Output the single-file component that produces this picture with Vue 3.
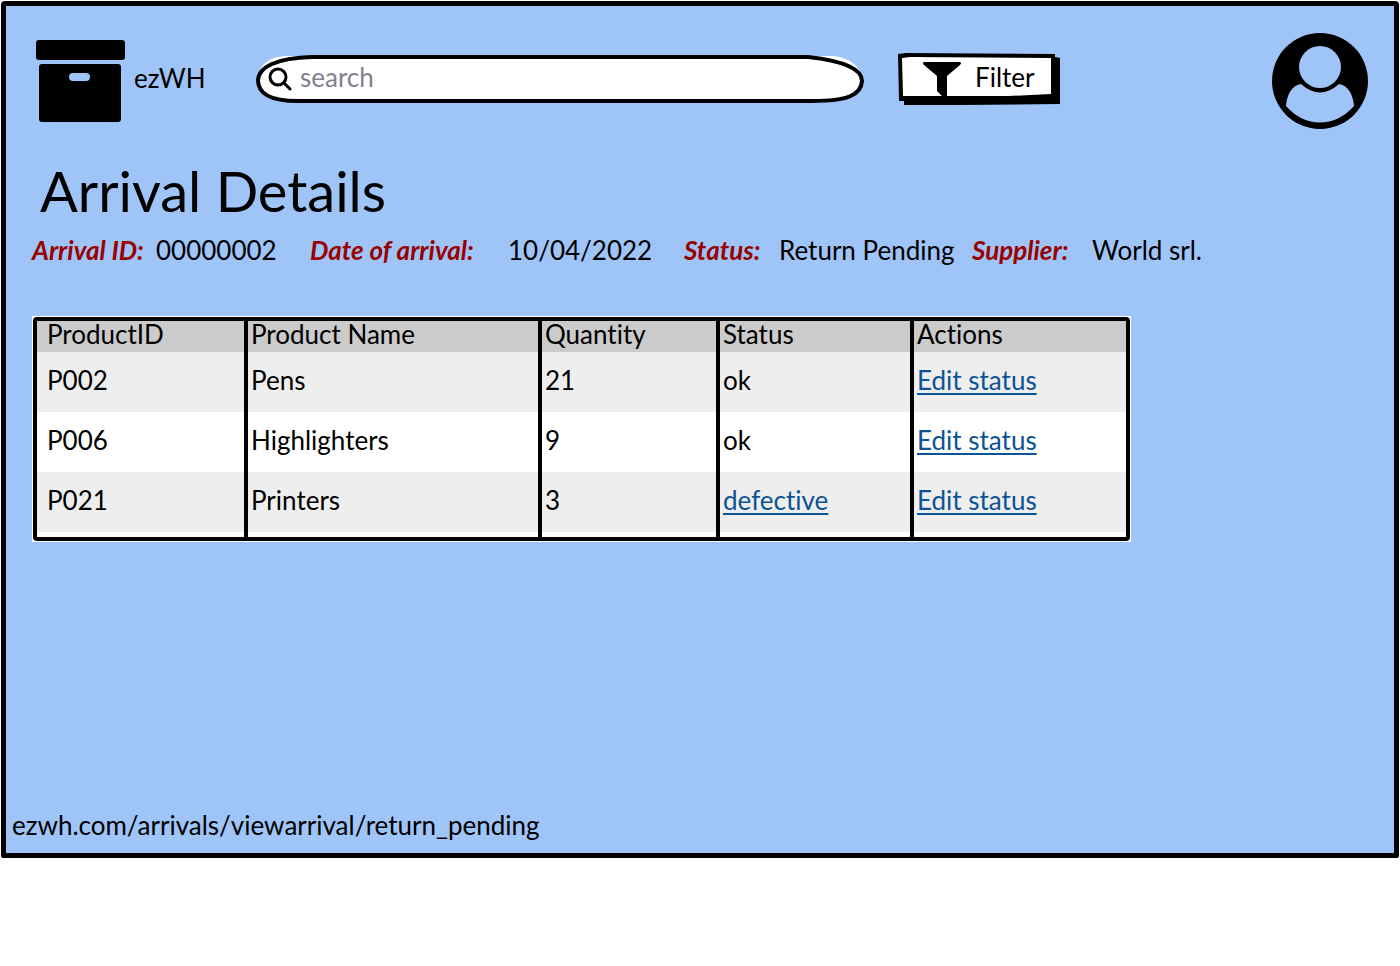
<script setup>
const details = [
  { label: 'Arrival ID:', value: '00000002' },
  { label: 'Date of arrival:', value: '10/04/2022' },
  { label: 'Status:', value: 'Return Pending' },
  { label: 'Supplier:', value: 'World srl.' },
]
const columns = ['ProductID', 'Product Name', 'Quantity', 'Status', 'Actions']
const products = [
  { id: 'P002', name: 'Pens', quantity: 21, status: 'ok' },
  { id: 'P006', name: 'Highlighters', quantity: 9, status: 'ok' },
  { id: 'P021', name: 'Printers', quantity: 3, status: 'defective' },
]
</script>

<template>
  <div class="window">
    <header class="topbar">
      <a class="brand" href="#">
        <svg class="brand-icon" viewBox="0 0 90 82" aria-hidden="true">
          <rect x="1" y="0" width="89" height="20" rx="3" />
          <path fill-rule="evenodd" d="M7 24H83Q86 24 86 27V79Q86 82 83 82H7Q4 82 4 79V27Q4 24 7 24ZM38 33A4 4 0 0 0 38 41H51A4 4 0 0 0 51 33Z" />
        </svg>
        <span>ezWH</span>
      </a>

      <div class="search">
        <svg class="sketch" viewBox="0 0 608 48" preserveAspectRatio="none" aria-hidden="true">
          <path fill="#fff" d="M30 1H576C592 2 604 10 606 24C604 40 592 46 574 46H32C12 46 2 38 2 24C3 10 12 2 30 1Z" />
          <path fill="none" stroke="#000" stroke-width="4" d="M56 2H552C588 6 606 14 606 26C605 40 592 46 556 46H42C14 46 2 39 2 25C3 12 20 3 56 2Z" />
        </svg>
        <svg class="search-icon" viewBox="0 0 24 24" aria-hidden="true">
          <circle cx="10" cy="10" r="8" fill="none" stroke="#000" stroke-width="3" />
          <path d="M16 16L22 22" stroke="#000" stroke-width="3" stroke-linecap="round" />
        </svg>
        <input type="search" placeholder="search" aria-label="Search" />
      </div>

      <button class="filter" type="button">
        <svg class="sketch" viewBox="0 0 162 52" preserveAspectRatio="none" aria-hidden="true">
          <path d="M0 1L8 0L157 1V4L162 5V51L60 52H6V48H1Z" />
          <path fill="#fff" d="M4 5L12 4L153 5V41L110 43H5Z" />
        </svg>
        <svg class="funnel" viewBox="0 0 38 34" aria-hidden="true">
          <path d="M1 0H37Q39 1 37 3L24 14V34H19L14 29V14L1 3Q-1 1 1 0Z" />
        </svg>
        <span>Filter</span>
      </button>

      <a class="account" href="#" aria-label="Account">
        <svg viewBox="0 0 96 96" aria-hidden="true">
          <circle cx="48" cy="48" r="48" />
          <circle class="cutout" cx="48" cy="34" r="21" />
          <path class="cutout" d="M29 51Q48 68 67 51C75 52 81 60 82 73C63 95 33 95 14 73C15 60 21 52 29 51Z" />
        </svg>
      </a>
    </header>

    <main>
      <h1>Arrival Details</h1>

      <dl class="details">
        <template v-for="item in details" :key="item.label">
          <dt>{{ item.label }}</dt>
          <dd>{{ item.value }}</dd>
        </template>
      </dl>

      <div class="table-frame">
        <table>
          <colgroup>
            <col class="col-id" />
            <col class="col-name" />
            <col class="col-quantity" />
            <col class="col-status" />
            <col />
          </colgroup>
          <thead>
            <tr>
              <th v-for="column in columns" :key="column" scope="col">{{ column }}</th>
            </tr>
          </thead>
          <tbody>
            <tr v-for="product in products" :key="product.id">
              <td>{{ product.id }}</td>
              <td>{{ product.name }}</td>
              <td>{{ product.quantity }}</td>
              <td>
                <a v-if="product.status === 'defective'" href="#">{{ product.status }}</a>
                <template v-else>{{ product.status }}</template>
              </td>
              <td><a href="#">Edit status</a></td>
            </tr>
          </tbody>
        </table>
      </div>
    </main>

    <footer>ezwh.com/arrivals/viewarrival/return_pending</footer>
  </div>
</template>

<style>
body {
  margin: 0;
  background: #fff;
}
</style>

<style scoped>
.window {
  box-sizing: border-box;
  display: flex;
  flex-direction: column;
  min-height: calc(100vh - 109px);
  margin: 1px 1px 0;
  border: 5px solid #000;
  border-radius: 4px 4px 2px 2px;
  background: #9fc4f8;
  color: #000;
  font: 26px/32px Lato, "Liberation Sans", sans-serif;
  font-variant-ligatures: none;
}

.topbar {
  display: flex;
  align-items: center;
  padding: 27px 26px 0 29px;
}

.brand {
  display: flex;
  align-items: center;
  gap: 9px;
  width: 221px;
  color: inherit;
  text-decoration: none;
}

.brand span {
  padding-bottom: 6px;
}

.brand-icon {
  width: 90px;
  height: 82px;
}

.sketch {
  position: absolute;
  inset: 0;
  width: 100%;
  height: 100%;
}

.search {
  position: relative;
  display: flex;
  align-items: center;
  flex: 0 1 608px;
  height: 48px;
  margin-bottom: 4px;
}

.search-icon {
  position: relative;
  flex: none;
  width: 24px;
  height: 24px;
  margin-left: 12px;
}

.search input {
  position: relative;
  flex: 1;
  min-width: 0;
  margin: 0 24px 4px 8px;
  padding: 0;
  border: 0;
  outline: 0;
  background: transparent;
  color: #000;
  font: inherit;
}

.search input::placeholder {
  color: #82828e;
  opacity: 1;
}

.filter {
  position: relative;
  display: flex;
  align-items: center;
  gap: 14px;
  width: 162px;
  height: 52px;
  margin: 0 0 4px 34px;
  padding: 0 0 4px 25px;
  border: 0;
  background: transparent;
  color: #000;
  font: inherit;
}

.filter span {
  position: relative;
}

.funnel {
  position: relative;
  width: 38px;
  height: 34px;
  margin-top: 4px;
}

.account {
  margin-left: auto;
}

.account svg {
  display: block;
  width: 96px;
  height: 96px;
}

.cutout {
  fill: #9fc4f8;
}

h1 {
  margin: 30px 0 0 34px;
  font-size: 56px;
  font-weight: 400;
  line-height: 64px;
}

.details {
  display: grid;
  grid-template-columns: 124px 154px 198px 176px 95px 193px 120px auto;
  margin: 11px 0 0 26px;
  white-space: nowrap;
}

.details dt {
  color: #990000;
  font-style: italic;
  font-weight: 700;
}

.details dd {
  margin: 0;
}

.table-frame {
  box-sizing: border-box;
  max-width: 1099px;
  margin: 50px 26px 0;
  padding: 1px;
  background: #fff;
}

table {
  width: 100%;
  border: 4px solid #000;
  border-radius: 4px;
  border-spacing: 0;
  table-layout: fixed;
}

.col-id {
  width: 211px;
}

.col-name {
  width: 294px;
}

.col-quantity {
  width: 178px;
}

.col-status {
  width: 194px;
}

th,
td {
  padding: 0 0 0 3px;
  border-right: 4px solid #000;
  font-weight: 400;
  text-align: left;
}

th:first-child,
td:first-child {
  padding-left: 10px;
}

th:last-child,
td:last-child {
  border-right: 0;
}

th {
  padding-bottom: 5px;
  background: #cbcbcb;
  line-height: 26px;
}

td {
  height: 56px;
  padding-bottom: 4px;
}

tbody tr:nth-child(odd) {
  background: #eee;
}

tbody tr:last-child td {
  padding-bottom: 9px;
  box-shadow: inset 0 -5px #fff;
}

td a {
  color: #0b5394;
  text-decoration-thickness: 2px;
  text-underline-offset: 3px;
}

footer {
  margin-top: auto;
  padding: 0 6px 12px;
}
</style>
